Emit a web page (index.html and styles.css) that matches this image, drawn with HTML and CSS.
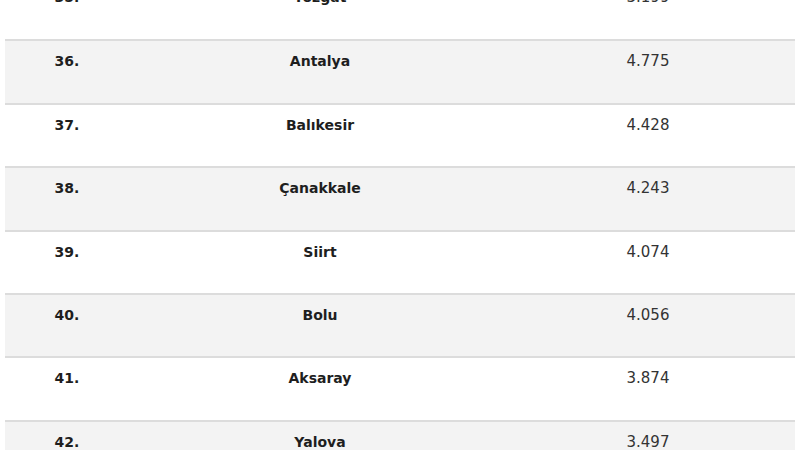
FILE: index.html
```html
<!DOCTYPE html>
<html lang="tr">
<head>
<meta charset="utf-8">
<link rel="stylesheet" href="styles.css">
</head>
<body>
<div class="wrap">
<table class="tbl">
<tbody>
<tr><td class="rank">35.</td><td class="name">Yozgat</td><td class="val">3.199</td></tr>
<tr class="alt"><td class="rank">36.</td><td class="name">Antalya</td><td class="val">4.775</td></tr>
<tr><td class="rank">37.</td><td class="name">Balıkesir</td><td class="val">4.428</td></tr>
<tr class="alt"><td class="rank">38.</td><td class="name">Çanakkale</td><td class="val">4.243</td></tr>
<tr><td class="rank">39.</td><td class="name">Siirt</td><td class="val">4.074</td></tr>
<tr class="alt"><td class="rank">40.</td><td class="name">Bolu</td><td class="val">4.056</td></tr>
<tr><td class="rank">41.</td><td class="name">Aksaray</td><td class="val">3.874</td></tr>
<tr class="alt"><td class="rank">42.</td><td class="name">Yalova</td><td class="val">3.497</td></tr>
</tbody>
</table>
</div>
</body>
</html>
```
FILE: styles.css
```css
html, body {
  margin: 0;
  padding: 0;
  background: #ffffff;
  overflow: hidden;
}
.wrap {
  margin-top: -23px;
  margin-left: 5px;
  width: 790px;
}
.tbl {
  width: 100%;
  border-collapse: collapse;
  font-family: "DejaVu Sans", "Liberation Sans", sans-serif;
  font-size: 14px;
  color: #333333;
  table-layout: fixed;
}
.tbl tr {
  height: 63.4px;
  border-bottom: 2px solid #dcdcdc;
}
.tbl tr.alt {
  background: #f3f3f3;
}
.tbl td {
  vertical-align: top;
  text-align: center;
  padding: 11px 0 0 0;
  line-height: 18px;
}
.rank {
  width: 124px;
  font-weight: bold;
  color: #1e1e1e;
}
.name {
  width: 382px;
  font-weight: bold;
  color: #1e1e1e;
}
.tbl td.val {
  font-weight: normal;
  font-size: 15px;
  padding-right: 10px;
}
```
